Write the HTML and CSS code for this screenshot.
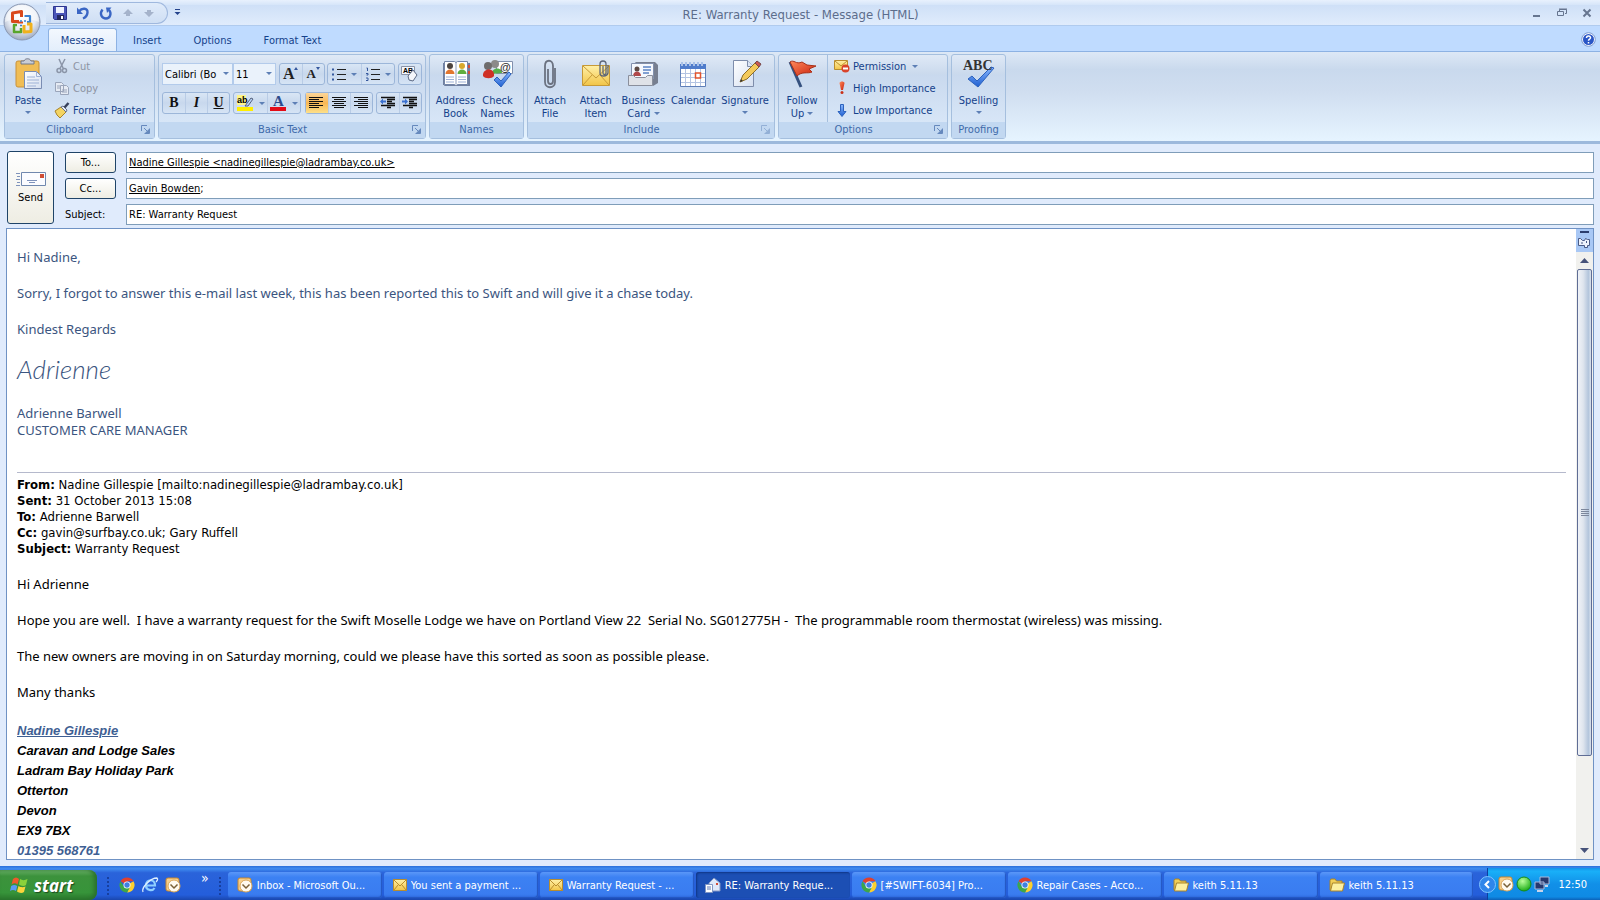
FILE: index.html
```html
<!DOCTYPE html>
<html lang="en">
<head>
    <meta charset="UTF-8">
    <meta name="viewport" content="width=device-width, initial-scale=1.0">
    <title>RE: Warranty Request - Message (HTML)</title>
    <link rel="stylesheet" href="styles.css">
</head>
<body>
    <!-- shared symbols -->
    <svg class="defs" width="0" height="0">
        <defs>
            <linearGradient id="gPaper" x1="0" y1="0" x2="1" y2="1"><stop offset="0" stop-color="#fff"/><stop offset="1" stop-color="#d5dff0"/></linearGradient>
            <linearGradient id="gYellow" x1="0" y1="0" x2="0" y2="1"><stop offset="0" stop-color="#fff0a8"/><stop offset="1" stop-color="#f2c548"/></linearGradient>
            <linearGradient id="gBlue" x1="0" y1="0" x2="0" y2="1"><stop offset="0" stop-color="#8ab8ff"/><stop offset="1" stop-color="#1f5fd0"/></linearGradient>
            <linearGradient id="gRed" x1="0" y1="0" x2="1" y2="1"><stop offset="0" stop-color="#ff8a5c"/><stop offset="1" stop-color="#c9200c"/></linearGradient>
            <radialGradient id="gGreen" cx=".4" cy=".3" r=".7"><stop offset="0" stop-color="#b8ff9a"/><stop offset="1" stop-color="#1fae1a"/></radialGradient>
            <radialGradient id="gOrb" cx=".5" cy=".35" r=".65"><stop offset="0" stop-color="#fff"/><stop offset=".6" stop-color="#e4e9f2"/><stop offset="1" stop-color="#9ea9bf"/></radialGradient>
        </defs>
        <symbol id="launch" viewBox="0 0 9 9"><path d="M.5 6V.5H6M3 3l4 4M8.500 3.500v5h-5" fill="none" stroke="#6689bd"/><path d="M8 4v4H4z" fill="#6689bd"/></symbol>
        <symbol id="outlook" viewBox="0 0 16 16"><rect x="1" y="1" width="13" height="13" rx="2" fill="#f6cf8c" stroke="#c8862c"/><circle cx="9" cy="9" r="6" fill="#fffaf0" stroke="#d9a75c"/><path d="M5.500 7.500L9 11l3.500-3.500" fill="none" stroke="#7a6038" stroke-width="1.500"/></symbol>
        <symbol id="mail" viewBox="0 0 14 12"><rect x=".5" y=".5" width="13" height="11" fill="url(#gYellow)" stroke="#b98d2e"/><path d="M1 1l6 6 6-6M1 11l4-5M13 11L9 6" fill="none" stroke="#b98d2e"/></symbol>
        <symbol id="chrome" viewBox="0 0 16 16"><path d="M8 8L1.500 4.200A7.500 7.500 0 0 1 14.500 4.200H8z" fill="#e0412f"/><path d="M8 8L14.500 4.200A7.500 7.500 0 0 1 8 15.500L11 9.500z" fill="#fbd02e"/><path d="M8 8l3 2-3 5.500A7.500 7.500 0 0 1 1.500 4.200L5 9.700z" fill="#3da64a"/><circle cx="8" cy="8" r="3.500" fill="#fff"/><circle cx="8" cy="8" r="2.700" fill="#3f80e0"/></symbol>
        <symbol id="folder" viewBox="0 0 16 14"><path d="M1 12V2.500L2 1h4l1.500 2H13v3" fill="#f2cf57" stroke="#a8832a"/><path d="M1.500 13L3.500 5H15.500L13.500 13z" fill="#fdf0a0" stroke="#a8832a"/></symbol>
    </svg>

    <header class="titlebar">
        <div class="quick">
            <button aria-label="Save"><svg width="14" height="14" viewBox="0 0 14 14"><path d="M.5.5h13v13h-12l-1-1z" fill="#4a55b8" stroke="#2c3590"/><path d="M3 1h8v6H3z" fill="#eef2ff"/><path d="M4 9h7v5H4z" fill="#23285f"/><path d="M8 10h2v3H8z" fill="#fff"/></svg></button>
            <button aria-label="Undo"><svg width="14" height="14" viewBox="0 0 14 14"><path d="M3 5.500C6 1.500 12 2 11.500 6.500c-.3 3-2 5-4.500 6" fill="none" stroke="#3a66c4" stroke-width="2.400"/><path d="M1 1.500v6.500h6z" fill="#3a66c4"/></svg></button>
            <button aria-label="Redo"><svg width="14" height="14" viewBox="0 0 14 14"><path d="M3.500 3.500C0 8 3 12.500 7 12.500s6-5 3-8.500" fill="none" stroke="#3a66c4" stroke-width="2.400"/><path d="M7 1.500h5.500L8 7z" fill="#3a66c4"/></svg></button>
            <button aria-label="Previous item"><svg width="12" height="10" viewBox="0 0 12 10"><path d="M6 1l5 5H8v2H4V6H1z" fill="#a5b3cb"/></svg></button>
            <button aria-label="Next item"><svg width="12" height="10" viewBox="0 0 12 10"><path d="M6 9l5-5H8V2H4v2H1z" fill="#a5b3cb"/></svg></button>
        </div>
        <button class="quick-more" aria-label="Customize"><svg width="7" height="7" viewBox="0 0 7 7"><path d="M1 .5h5" stroke="#24438c"/><path d="M.5 3h6l-3 3z" fill="#24438c"/></svg></button>
        <h1 class="title">RE: Warranty Request - Message (HTML)</h1>
        <div class="window-buttons">
            <button aria-label="Minimize"><svg width="10" height="10" viewBox="0 0 10 10"><path d="M1 8h7" stroke="#66758f" stroke-width="2"/></svg></button>
            <button aria-label="Restore"><svg width="10" height="10" viewBox="0 0 10 10"><path d="M2.500 3V1.500h7v4H8M.5 3.500h6v4h-6zM2 1h8" fill="none" stroke="#66758f"/></svg></button>
            <button aria-label="Close"><svg width="10" height="10" viewBox="0 0 10 10"><path d="M1.500 1.500l7 7M8.500 1.500l-7 7" stroke="#66758f" stroke-width="2"/></svg></button>
        </div>
    </header>
    <button class="orb" aria-label="Office Button"><svg width="38" height="38" viewBox="0 0 38 38"><circle cx="19" cy="19" r="18" fill="url(#gOrb)" stroke="#8a98b3"/><path d="M2 19a17 17 0 0 1 34 0c-8-4-26-4-34 0z" fill="#fff" opacity=".5"/><g fill="none" stroke-linejoin="round"><path d="M15 18.500H9.500V10l9-1.500V14" stroke="#d9481c" stroke-width="3"/><path d="M21.500 13H27v6h-3" stroke="#3b82d0" stroke-width="2.200"/><path d="M15 17v2.500h5" stroke="#d9481c" stroke-width="2"/><path d="M14 22h-3v7h7v-4" stroke="#58a52c" stroke-width="2.500"/><path d="M21 22v7l7-.5V21h-4" stroke="#f0b11c" stroke-width="3"/><path d="M17 18h2M21 18h2M17 22.500h2" stroke="#3b82d0" stroke-width="1.500"/></g></svg></button>

    <nav class="tabs">
        <button class="tab tab-active">Message</button>
        <button class="tab">Insert</button>
        <button class="tab">Options</button>
        <button class="tab">Format Text</button>
        <button class="help" aria-label="Help"><svg width="15" height="15" viewBox="0 0 15 15"><circle cx="7.500" cy="7.500" r="6.800" fill="#fff" stroke="#7d9ad0"/><circle cx="7.500" cy="7.500" r="5.500" fill="#2a56c6"/><path d="M5.500 6c0-3 4.200-2.500 4 0-.2 1.200-2 1.200-2 2.700M7.500 10v1.500" fill="none" stroke="#fff" stroke-width="1.500"/></svg></button>
    </nav>

    <div class="ribbon">
        <section class="group group-clipboard">
            <div class="group-body">
                <button class="big"><svg width="30" height="32" viewBox="0 0 30 32"><rect x="3" y="3" width="23" height="26" rx="2" fill="#f0bd55" stroke="#c8913a"/><path d="M8 6V3h3c1-3 6-3 7 0h3v3z" fill="#c9cdd6" stroke="#71788a"/><path d="M11.500 13.500h12l5 5v12h-17z" fill="url(#gPaper)" stroke="#7a8db3"/><path d="M23.500 13.500v5h5M14 19h8M14 22h12M14 25h12M14 28h9" fill="none" stroke="#9db1d6"/></svg><span>Paste</span><i class="arrow"></i></button>
                <div class="small-list">
                    <button class="small off"><svg width="16" height="16" viewBox="0 0 16 16"><g fill="none" stroke="#8b95a8" stroke-width="1.500"><path d="M5 1l4.500 10M11 1L6 10.500"/><circle cx="5" cy="12.500" r="2"/><circle cx="10.500" cy="12.500" r="2"/></g></svg>Cut</button>
                    <button class="small off"><svg width="16" height="16" viewBox="0 0 16 16"><path d="M1.500 2.500h6l2 2v7h-8zM6.500 5.500h6l2 2v7h-8z" fill="#e6ebf4" stroke="#9aa5ba"/><path d="M3 6h3M3 8h3M8 10h5M8 12h5" stroke="#9aa5ba"/></svg>Copy</button>
                    <button class="small"><svg width="16" height="16" viewBox="0 0 16 16"><path d="M1 9l6-4 5 5-6 6-3-3z" fill="#f3d463" stroke="#a98328"/><path d="M7 5l2-1 4 4-1 2z" fill="#e9edf5" stroke="#66718a"/><path d="M10.500 5.500L14.500 1" stroke="#37415c" stroke-width="2.500"/></svg>Format Painter</button>
                </div>
            </div>
            <h2 class="group-title">Clipboard<button class="launcher" aria-label="Clipboard options"><svg width="9" height="9"><use href="#launch"/></svg></button></h2>
        </section>

        <section class="group group-text">
            <div class="group-body text-rows">
                <div class="row">
                    <div class="fonts">
                        <span class="select select-font"><select aria-label="Font"><option>Calibri (Bo</option></select></span>
                        <span class="select select-size"><select aria-label="Font size"><option>11</option></select></span>
                    </div>
                    <div class="set">
                        <button class="tool" aria-label="Grow font"><b class="glyph-a">A</b><i class="tip up"></i></button>
                        <button class="tool" aria-label="Shrink font"><b class="glyph-a small-a">A</b><i class="tip"></i></button>
                    </div>
                    <div class="set">
                        <button class="tool wide" aria-label="Bullets"><svg width="14" height="14" viewBox="0 0 14 14"><path d="M5 2.500h9M5 7.500h9M5 12.500h9" stroke="#222"/><path d="M0 1.500h2v2H0zM0 6.500h2v2H0zM0 11.500h2v2H0z" fill="#35589e"/></svg><i class="arrow"></i></button>
                        <button class="tool wide" aria-label="Numbering"><svg width="14" height="14" viewBox="0 0 14 14"><path d="M5 2.500h9M5 7.500h9M5 12.500h9" stroke="#222"/><path d="M.5 1h1v3M0 6.500h2v1.500H0.500M0 11h2v2.500H0" fill="none" stroke="#35589e"/></svg><i class="arrow"></i></button>
                    </div>
                    <div class="set">
                        <button class="tool" aria-label="Clear formatting"><svg width="18" height="16" viewBox="0 0 18 16"><path d="M.5.500h13v8H.5z" fill="#f4f6fb" stroke="#8a94a8"/><text x="2" y="7" class="svg-tiny">AB</text><path d="M7 10l5-6 4 5-4 6-4-1z" fill="#f4f6fb" stroke="#5c6a85"/></svg></button>
                    </div>
                </div>
                <div class="row">
                    <div class="set">
                        <button class="tool letter" aria-label="Bold"><b>B</b></button>
                        <button class="tool letter" aria-label="Italic"><em>I</em></button>
                        <button class="tool letter" aria-label="Underline"><u>U</u></button>
                    </div>
                    <div class="set">
                        <button class="tool wide" aria-label="Highlight"><svg width="17" height="17" viewBox="0 0 17 17"><path d="M0 0h9v10H0z" fill="#fdf58a"/><path d="M0 12h16v4H0z" fill="#ffee00"/><text x="0" y="8" class="svg-ab">ab</text><path d="M8 11l6-8 2 1-5 7z" fill="#b9d5f7" stroke="#55617c"/></svg><i class="arrow"></i></button>
                        <button class="tool wide" aria-label="Font color"><svg width="17" height="17" viewBox="0 0 17 17"><text x="3" y="11" class="svg-a">A</text><path d="M0 12h16v4H0z" fill="#e30b17"/></svg><i class="arrow"></i></button>
                    </div>
                    <div class="set">
                        <button class="tool on" aria-label="Align left"><svg width="15" height="14" viewBox="0 0 15 14"><path d="M0 1.500h14M0 3.500h10M0 5.500h14M0 7.500h10M0 9.500h14M0 11.500h10" stroke="#111"/></svg></button>
                        <button class="tool" aria-label="Center"><svg width="15" height="14" viewBox="0 0 15 14"><path d="M0 1.500h14M2 3.500h10M0 5.500h14M2 7.500h10M0 9.500h14M2 11.500h10" stroke="#111"/></svg></button>
                        <button class="tool" aria-label="Align right"><svg width="15" height="14" viewBox="0 0 15 14"><path d="M0 1.500h14M4 3.500h10M0 5.500h14M4 7.500h10M0 9.500h14M4 11.500h10" stroke="#111"/></svg></button>
                    </div>
                    <div class="set">
                        <button class="tool" aria-label="Decrease indent"><svg width="16" height="14" viewBox="0 0 16 14"><path d="M1 1.500h14M7 3.500h8M7 5.500h5M7 7.500h8M1 9.500h14M7 11.500h4" stroke="#111" stroke-width="1.400"/><path d="M0 5.500l3-3v2h3v2H3v2z" fill="#3a70d0"/></svg></button>
                        <button class="tool" aria-label="Increase indent"><svg width="16" height="14" viewBox="0 0 16 14"><path d="M1 1.500h14M7 3.500h8M7 5.500h5M7 7.500h8M1 9.500h14M7 11.500h4" stroke="#111" stroke-width="1.400"/><path d="M6 5.500l-3-3v2H0v2h3v2z" fill="#3a70d0"/></svg></button>
                    </div>
                </div>
            </div>
            <h2 class="group-title">Basic Text<button class="launcher" aria-label="Basic Text options"><svg width="9" height="9"><use href="#launch"/></svg></button></h2>
        </section>

        <section class="group group-names">
            <div class="group-body">
                <button class="big"><svg width="32" height="32" viewBox="0 0 32 32"><path d="M3 5h2v22H3zM27 5h3v23H4l1-2h22z" fill="#6f7f9f"/><path d="M29 7v3M29 13v3" stroke="#d64c3a" stroke-width="2"/><path d="M4.500 3.500h10l1.500 1 1.500-1h10v23h-10l-1.500 1-1.500-1h-10z" fill="#fff" stroke="#7486a8"/><path d="M16 4v22" stroke="#90a0bf"/><circle cx="10" cy="8" r="3" fill="#4d4540"/><path d="M5.500 16c0-6 9-6 9 0z" fill="#e2762e"/><circle cx="22" cy="8" r="3" fill="#d8a92c"/><path d="M17.500 16c0-6 9-6 9 0z" fill="#5fae40"/><path d="M6 19h8M6 21.500h8M6 24h8M18 19h8M18 21.500h8M18 24h8" stroke="#9db1d6"/></svg><span>Address<br>Book</span></button>
                <button class="big"><svg width="32" height="32" viewBox="0 0 32 32"><path d="M14.500 3.500h16v12h-16z" fill="#fff" stroke="#8190ad"/><circle cx="13" cy="6" r="4" fill="#8b8a8a"/><path d="M10 16c0-7 10-7 10-1z" fill="#55b04a"/><text x="18" y="13" class="svg-at">@</text><circle cx="6" cy="8" r="4" fill="#6e6c6c"/><path d="M1 18c-1-8 12-9 11 0-2 3-9 3-11 0z" fill="#cf3026"/><path d="M12 22l3-3 4 4 8-9 2 2-10 13z" fill="url(#gBlue)" stroke="#2c62bd"/></svg><span>Check<br>Names</span></button>
            </div>
            <h2 class="group-title">Names</h2>
        </section>

        <section class="group group-include">
            <div class="group-body">
                <button class="big"><svg width="32" height="32" viewBox="0 0 32 32"><path d="M14 11v12c0 4 5 4 5 0V8c0-7-8-7-8 0v16c0 7 10 7 10 0V10" fill="none" stroke="#6b7280" stroke-width="1.800"/></svg><span>Attach<br>File</span></button>
                <button class="big"><svg width="32" height="32" viewBox="0 0 32 32"><path d="M2.500 7.500h27v20h-27z" fill="url(#gYellow)" stroke="#c79a37"/><path d="M3 8l13 12L29 8M3 27l9-10M29 27l-9-10" fill="none" stroke="#c79a37"/><path d="M23 8v7c0 2 3 2 3 0V6c0-4-6-4-6 0v9c0 4 7 4 8 0V7" fill="none" stroke="#5c6579" stroke-width="1.300"/></svg><span>Attach<br>Item</span></button>
                <button class="big"><svg width="32" height="32" viewBox="0 0 32 32"><path d="M8 4h20l3 3v18l-5 3z" fill="#777f90"/><path d="M4.500 5.500h22v15h-22z" fill="#f5f8fd" stroke="#8290ac"/><circle cx="10" cy="11" r="2.500" fill="#5d4a44"/><path d="M6 18c0-6 8-6 8 0z" fill="#b0484a"/><path d="M16 9h8M16 12h8M16 15h6" stroke="#5b82c4" stroke-width="1.500"/><path d="M1.500 17.500h5l2 2h10l2-2h5v10h-24z" fill="#dfe2e8" stroke="#8a8f9c"/></svg><span>Business<br>Card <i class="arrow"></i></span></button>
                <button class="big"><svg width="32" height="32" viewBox="0 0 32 32"><path d="M3.500 6.500h25v22h-25z" fill="#fff" stroke="#5f7fb8"/><path d="M3 6h26v5H3z" fill="#4f7ccb"/><path d="M5 4v4M9 4v4M13 4v4M17 4v4M21 4v4M25 4v4" stroke="#a9c1e8" stroke-width="2"/><path d="M8.500 11v17M13.500 11v17M18.500 11v17M23.500 11v17M4 15.500h24M4 19.500h24M4 24.500h24" stroke="#b4c4e2"/><path d="M18.500 15h5v5h-5z" fill="#fff" stroke="#e1532d" stroke-width="1.500"/></svg><span>Calendar</span></button>
                <button class="big"><svg width="32" height="32" viewBox="0 0 32 32"><path d="M4.500 2.500h14l6 6v20h-20z" fill="url(#gPaper)" stroke="#7e8dab"/><path d="M18.500 2.500v6h6" fill="#dce5f4" stroke="#7e8dab"/><path d="M11 24l3-7L26 5l4 4-12 12z" fill="#f3c95a" stroke="#8c6c26"/><path d="M26 5l2-2 4 3-2 3z" fill="#c8574f" stroke="#77494b"/><path d="M11 24l1-3 2 2z" fill="#333"/></svg><span>Signature</span><i class="arrow"></i></button>
            </div>
            <h2 class="group-title">Include<button class="launcher off" aria-label="Include options" disabled><svg width="9" height="9"><use href="#launch"/></svg></button></h2>
        </section>

        <section class="group group-options">
            <div class="group-body">
                <button class="big"><svg width="32" height="32" viewBox="0 0 32 32"><path d="M4 4l11 25" stroke="#35517f" stroke-width="3"/><path d="M4 4c4-3 6 3 12 0l5 3 9 1-7 3 3 3c-4 2-10-1-15 4z" fill="url(#gRed)" stroke="#a93018"/></svg><span>Follow<br>Up <i class="arrow"></i></span></button>
                <div class="small-list divided">
                    <button class="small"><svg width="16" height="16" viewBox="0 0 16 16"><path d="M.5 2.500h13v9H.5z" fill="url(#gYellow)" stroke="#b98d2e"/><path d="M1 3l6 5 6-5" fill="none" stroke="#b98d2e"/><circle cx="11.500" cy="10.500" r="4" fill="#d9442c"/><path d="M9 10.500h5" stroke="#fff" stroke-width="2"/></svg>Permission <i class="arrow"></i></button>
                    <button class="small"><svg width="16" height="16" viewBox="0 0 16 16"><path d="M5.500 3c.5-2 4.500-2 5 0L9 10H7z" fill="url(#gRed)"/><circle cx="8" cy="12.500" r="1.500" fill="#c93018"/></svg>High Importance</button>
                    <button class="small"><svg width="16" height="16" viewBox="0 0 16 16"><path d="M6.500 2.500h3v7H12l-4 5-4-5h2.500z" fill="url(#gBlue)" stroke="#2c62bd"/></svg>Low Importance</button>
                </div>
            </div>
            <h2 class="group-title">Options<button class="launcher" aria-label="Message options"><svg width="9" height="9"><use href="#launch"/></svg></button></h2>
        </section>

        <section class="group group-proofing">
            <div class="group-body">
                <button class="big"><svg width="32" height="32" viewBox="0 0 32 32"><path d="M5 21l4-3 5 5L28 9l3 1-16 19z" fill="url(#gBlue)" stroke="#2c62bd"/><text x="0" y="12" class="svg-abc">ABC</text></svg><span>Spelling</span><i class="arrow"></i></button>
            </div>
            <h2 class="group-title">Proofing</h2>
        </section>
    </div>

    <main class="compose">
        <form class="headers">
            <button type="button" class="send"><svg width="30" height="15" viewBox="0 0 30 15"><path d="M5.500.500h24v13h-24z" fill="#fbfcff" stroke="#7088ae"/><path d="M24 2h4v4h-4z" fill="#cf4e33"/><path d="M11 8.500h10M13 10.500h6M0 1.500h4M1 4.500h3M0 7.500h4M1 10.500h3M0 13.500h4" stroke="#7f93bb"/></svg>Send</button>
            <div class="fields">
                <button type="button" class="pick">To...</button>
                <div class="field"><a href="#">Nadine Gillespie &lt;nadinegillespie@ladrambay.co.uk&gt;</a><input type="text" aria-label="To"></div>
                <button type="button" class="pick">Cc...</button>
                <div class="field"><a href="#">Gavin Bowden</a>;<input type="text" aria-label="Cc"></div>
                <label for="subject">Subject:</label>
                <input class="field" type="text" id="subject" value="RE: Warranty Request">
            </div>
        </form>

        <div class="editor">
            <article class="message">
                <div class="reply">
                    <p>Hi Nadine,</p>
                    <p>Sorry, I forgot to answer this e-mail last week, this has been reported this to Swift and will give it a chase today.</p>
                    <p>Kindest Regards</p>
                    <p class="handwriting">Adrienne</p>
                    <p class="signoff">Adrienne Barwell<br>CUSTOMER CARE MANAGER</p>
                </div>
                <div class="quoted-head">
                    <b>From:</b> Nadine Gillespie [mailto:nadinegillespie@ladrambay.co.uk]<br>
                    <b>Sent:</b> 31 October 2013 15:08<br>
                    <b>To:</b> Adrienne Barwell<br>
                    <b>Cc:</b> gavin@surfbay.co.uk; Gary Ruffell<br>
                    <b>Subject:</b> Warranty Request
                </div>
                <p>Hi Adrienne</p>
                <p>Hope you are well.&nbsp; I have a warranty request for the Swift Moselle Lodge we have on Portland View 22&nbsp; Serial No. SG012775H -&nbsp; The programmable room thermostat (wireless) was missing.</p>
                <p>The new owners are moving in on Saturday morning, could we please have this sorted as soon as possible please.</p>
                <p>Many thanks</p>
                <address class="signature">
                    <a href="#">Nadine Gillespie</a><br>
                    Caravan and Lodge Sales<br>
                    Ladram Bay Holiday Park<br>
                    Otterton<br>
                    Devon<br>
                    EX9 7BX<br>
                    <span class="phone">01395 568761</span>
                </address>
            </article>
            <div class="scrollbar">
                <div class="scroll-top"><svg width="14" height="20" viewBox="0 0 14 20"><path d="M3 2h9" stroke="#2c3e6e" stroke-width="2"/><path d="M1.500 8.500h2l2 2h2l1-2 2 1h2v6h-2v2h-3v-2h-6z" fill="#eef3fc" stroke="#4a5b86"/><path d="M5 12v2M9.500 11v2" stroke="#4a5b86"/></svg></div>
                <button class="scroll-arrow" aria-label="Scroll up"><svg width="9" height="5" viewBox="0 0 9 5"><path d="M0 5h9L4.500 0z" fill="#47537a"/></svg></button>
                <div class="scroll-track"><div class="scroll-thumb"></div></div>
                <button class="scroll-arrow" aria-label="Scroll down"><svg width="9" height="5" viewBox="0 0 9 5"><path d="M0 0h9L4.500 5z" fill="#47537a"/></svg></button>
            </div>
        </div>
    </main>

    <footer class="taskbar">
        <button class="start"><svg width="19" height="18" viewBox="0 0 19 18"><path d="M3 3c2-2 4-2 6 0L7.500 8.500c-2-2-4-1.500-6 0z" fill="#ee5a2c"/><path d="M10 3c2 1.500 5 1.500 7.500 0L16 9c-2 1.500-5 1-7-.5z" fill="#8bd13b"/><path d="M1.200 10c2-1.500 4-1.500 6 0L6 15c-2-1.500-4-1.500-6 0z" fill="#5a9bf5"/><path d="M8.500 10c2 1.500 5 1.500 7 0.500L14 16c-2 1.500-5 1-7-.5z" fill="#fbd43c"/></svg>start</button>
        <i class="grip"></i>
        <div class="launch">
            <button aria-label="Chrome"><svg width="16" height="16"><use href="#chrome"/></svg></button>
            <button aria-label="Internet Explorer"><svg width="16" height="16" viewBox="0 0 16 16"><path d="M4 8.500h9c0-7-9-7-9 0 0 5 6.500 6 8.500 2.500" fill="none" stroke="#8fd0ff" stroke-width="2.200"/><path d="M1 15C-1 11 8 1 15 1c1.500 1 0 3-1 4" fill="none" stroke="#dff0ff" stroke-width="1.300"/></svg></button>
            <button aria-label="Outlook"><svg width="16" height="16"><use href="#outlook"/></svg></button>
        </div>
        <span class="more">»</span>
        <i class="grip"></i>
        <div class="tasks">
            <button class="task"><svg width="16" height="16"><use href="#outlook"/></svg><span>Inbox - Microsoft Ou...</span></button>
            <button class="task"><svg width="14" height="12"><use href="#mail"/></svg><span>You sent a payment ...</span></button>
            <button class="task"><svg width="14" height="12"><use href="#mail"/></svg><span>Warranty Request - ...</span></button>
            <button class="task task-active"><svg width="16" height="16" viewBox="0 0 16 16"><path d="M4 6l5-5 6 5v8H5z" fill="#dfe8fa" stroke="#8297c4"/><path d="M.5 7.500h7v8h-7z" fill="#fff" stroke="#8297c4"/><path d="M2 10h4M2 12h4" stroke="#5f78b5"/><path d="M11 6h2v2h-2z" fill="#d34b36"/></svg><span>RE: Warranty Reque...</span></button>
            <button class="task"><svg width="16" height="16"><use href="#chrome"/></svg><span>[#SWIFT-6034] Pro...</span></button>
            <button class="task"><svg width="16" height="16"><use href="#chrome"/></svg><span>Repair Cases - Acco...</span></button>
            <button class="task"><svg width="16" height="14"><use href="#folder"/></svg><span>keith 5.11.13</span></button>
            <button class="task"><svg width="16" height="14"><use href="#folder"/></svg><span>keith 5.11.13</span></button>
        </div>
        <div class="tray">
            <button class="tray-toggle" aria-label="Show hidden icons"><svg width="17" height="17" viewBox="0 0 17 17"><circle cx="8.500" cy="8.500" r="8" fill="#2f86ea" stroke="#7fc4ff"/><path d="M10 5L6.500 8.500 10 12" fill="none" stroke="#fff" stroke-width="2"/></svg></button>
            <svg width="16" height="16"><use href="#outlook"/></svg>
            <svg width="16" height="16" viewBox="0 0 16 16"><circle cx="8" cy="8" r="7" fill="url(#gGreen)" stroke="#168a1c"/></svg>
            <svg width="16" height="16" viewBox="0 0 16 16"><path d="M6 1h9v7H6zM1 6h9v7H1z" fill="#26386e" stroke="#a9b9dc"/><path d="M3 15h6M11 10h3" stroke="#c9d4ea" stroke-width="2"/></svg>
            <time>12:50</time>
        </div>
    </footer>
</body>
</html>
```
FILE: styles.css
```css
*{
    box-sizing: border-box;
}
body{
    margin: 0;
    height: 100vh;
    display: flex;
    flex-direction: column;
    overflow: hidden;
    background: #e0ebfc;
    font-family: "DejaVu Sans Condensed", Tahoma, "Noto Sans", sans-serif;
    font-size: 11px;
    color: #000;
}
button{
    margin: 0;
    padding: 0;
    border: 0;
    background: none;
    font: inherit;
    color: inherit;
    white-space: nowrap;
}
svg{
    display: block;
    flex: none;
    overflow: visible;
}
.defs{
    position: absolute;
}

/* title bar */
.titlebar{
    display: flex;
    align-items: center;
    height: 26px;
    padding: 0 8px 0 46px;
    border-bottom: 1px solid #b0cbee;
    background: linear-gradient(#e8f1fd, #d6e5f9 20%, #cfe0f7 22%, #e0ecfc);
}
.quick{
    display: flex;
    align-items: center;
    gap: 9px;
    height: 22px;
    width: 122px;
    padding-left: 7px;
    border: 1px solid #9fb8de;
    border-left: 0;
    border-radius: 0 11px 11px 0;
    background: linear-gradient(#e0ebfa, #cfdff4);
}
.quick-more{
    margin-left: 6px;
}
.title{
    flex: 1;
    margin: 3px 0 0;
    padding-right: 112px;
    text-align: center;
    font-size: 13px;
    font-weight: normal;
    color: #5c6d8c;
}
.window-buttons{
    display: flex;
    gap: 15px;
}
.orb{
    position: absolute;
    top: 3px;
    left: 3px;
    z-index: 2;
}

/* tabs */
.tabs{
    display: flex;
    height: 25px;
    padding: 2px 4px 0 48px;
    background: #bfdbff;
    font-size: 11px;
    color: #15428b;
}
.tab{
    padding: 0 15px;
    border: 1px solid transparent;
    border-bottom: 0;
}
.tab-active{
    min-width: 69px;
    padding: 0 10px;
    border-color: #8db2e3;
    border-radius: 3px 3px 0 0;
    background: linear-gradient(#f3f8fe, #e3eefb);
}
.help{
    margin-left: auto;
}

/* ribbon */
.ribbon{
    display: flex;
    gap: 3px;
    height: 93px;
    padding: 2px 4px;
    border: solid #8db2e3;
    border-width: 1px 0 3px;
    border-bottom-color: #9db9dc;
    background: linear-gradient(#dde8f6, #c9d9ed 20%, #d0def0 45%, #e6f4ff);
    color: #15428b;
}
.group{
    display: flex;
    flex-direction: column;
    border: 1px solid #a5bfde;
    border-radius: 3px;
    background: linear-gradient(#dfe9f6, #cbdaed 22%, #c9d9ee 24%, #dceafa);
}
.group-clipboard{ width: 151px; }
.group-text{ width: 268px; }
.group-names{ width: 95px; }
.group-include{ width: 248px; }
.group-options{ width: 170px; }
.group-proofing{ width: 55px; }
.group-body{
    flex: 1;
    min-height: 0;
    display: flex;
    justify-content: center;
}
.group-include .group-body{
    justify-content: space-between;
    padding: 0 4px 0 1px;
}
.group-title{
    flex: none;
    position: relative;
    height: 16px;
    margin: 0;
    background: #c2d8f1;
    font-size: 11px;
    line-height: 16px;
    font-weight: normal;
    text-align: center;
    color: #3e6aaa;
}
.group-title:has(.launcher){
    padding-right: 19px;
}
.launcher{
    position: absolute;
    right: 4px;
    top: 3px;
}
.launcher.off{
    opacity: 0.5;
}
.arrow{
    display: inline-block;
    width: 0;
    height: 0;
    border: 3px solid transparent;
    border-top-color: #5d7fb5;
    border-bottom: 0;
    vertical-align: 2px;
}
.big{
    display: flex;
    flex-direction: column;
    align-items: center;
    min-width: 42px;
    padding: 3px 1px 0;
    line-height: 13px;
}
.big > svg{
    margin-bottom: 4px;
}
.big > .arrow{
    margin-top: 4px;
}
.group-clipboard .big,
.group-options .big{
    min-width: 46px;
}
.small-list{
    flex: 1;
    padding-left: 3px;
}
.divided{
    margin-left: 2px;
    padding-left: 6px;
    border-left: 1px solid #a5bfde;
}
.small{
    display: flex;
    align-items: center;
    gap: 3px;
    height: 22px;
}
.small .arrow{
    margin-left: 3px;
}
.small.off{
    color: #8d94a3;
}
.text-rows{
    flex-direction: column;
    justify-content: flex-start;
    gap: 7px;
    padding: 8px 3px 0;
}
.row{
    display: flex;
    justify-content: space-between;
}
.fonts{
    display: flex;
}
.select{
    position: relative;
    height: 22px;
}
.select::after{
    content: "";
    position: absolute;
    right: 4px;
    top: 9px;
    border: 3px solid transparent;
    border-top-color: #5d7fb5;
    border-bottom: 0;
    pointer-events: none;
}
.select select{
    appearance: none;
    width: 100%;
    height: 22px;
    padding: 0 2px;
    border: 1px solid #b3cbeb;
    border-radius: 0;
    background: #eaf2fb;
    font: inherit;
    color: #000;
}
.select-font{ width: 71px; }
.select-size{ width: 43px; }
.set{
    display: flex;
    height: 22px;
    border: 1px solid #9cb6d9;
    border-radius: 3px;
    background: linear-gradient(#d9e6f5, #c8d8ed 50%, #d6e4f5);
}
.tool{
    display: flex;
    align-items: center;
    justify-content: center;
    width: 22px;
}
.tool + .tool{
    border-left: 1px solid #b9cce6;
}
.wide{
    width: 33px;
    gap: 5px;
}
.on{
    background: linear-gradient(#fbd69a, #f9b754 50%, #fde08a);
}
.glyph-a{
    font: bold 16px "Liberation Serif", serif;
    color: #222;
}
.small-a{
    font-size: 13px;
}
.tip{
    align-self: flex-start;
    margin-top: 3px;
    border: 2px solid transparent;
    border-top: 3px solid #35589e;
    border-bottom: 0;
}
.tip.up{
    border-top: 0;
    border-bottom: 3px solid #35589e;
}
.letter{
    font: bold 14px "Liberation Serif", serif;
    color: #111;
}
.svg-tiny{ font: bold 7px "Liberation Sans", sans-serif; }
.svg-ab{ font: bold 9px "Liberation Sans", sans-serif; }
.svg-a{ font: bold 15px "Liberation Serif", serif; fill: #2c4b8c; }
.svg-at{ font: bold 11px "Liberation Sans", sans-serif; fill: #333; }
.svg-abc{ font: bold 14px "Liberation Serif", serif; fill: #333; }

/* message headers */
.compose{
    flex: 1;
    min-height: 0;
    display: flex;
    flex-direction: column;
    padding: 7px 6px 6px;
}
.headers{
    display: flex;
    gap: 11px;
    padding-left: 1px;
    margin-bottom: 3px;
}
.send{
    display: flex;
    flex-direction: column;
    align-items: center;
    justify-content: center;
    gap: 4px;
    width: 47px;
    height: 73px;
    border: 1px solid #1f4468;
    border-radius: 3px;
    background: linear-gradient(#fff, #eeede3);
}
.fields{
    flex: 1;
    display: grid;
    grid-template-columns: 51px 1fr;
    grid-auto-rows: 22px;
    gap: 4px 10px;
    align-items: center;
}
.pick{
    height: 21px;
    border: 1px solid #1f4468;
    border-radius: 3px;
    background: linear-gradient(#fff, #eeede3);
}
.field{
    display: flex;
    align-items: center;
    width: 100%;
    height: 21px;
    padding: 0 2px;
    border: 1px solid #7f9db9;
    background: #fff;
    font: inherit;
    color: #000;
}
.field a{
    color: #000;
}
.field input{
    flex: 1;
    border: 0;
    background: none;
}

/* editor */
.editor{
    flex: 1;
    min-height: 0;
    display: flex;
    border: 1px solid #6f92c4;
    background: #fff;
}
.message{
    flex: 1;
    min-width: 0;
    overflow: hidden;
    padding: 19px 10px 0;
    font-family: "Noto Sans", Calibri, sans-serif;
    font-size: 13px;
    line-height: 18px;
}
.message p{
    margin: 0 0 18px;
}
.reply{
    color: #3b5580;
    padding-bottom: 15px;
    border-bottom: 1px solid #b5b9cc;
}
.message .handwriting{
    margin-bottom: 23px;
    font-family: "Bradley Hand ITC", Lato, cursive;
    font-size: 26px;
    line-height: 26px;
    font-style: italic;
    font-weight: 300;
}
.message .signoff{
    line-height: 17px;
}
.quoted-head{
    margin: 4px 0 18px;
    font-family: "DejaVu Sans Condensed", Tahoma, sans-serif;
    line-height: 16px;
}
.signature{
    padding-top: 2px;
    font-family: "Liberation Sans", Arial, sans-serif;
    font-size: 13px;
    line-height: 20px;
    font-weight: bold;
    font-style: italic;
}
.signature a, .phone{
    color: #3f5f93;
}

/* scrollbar */
.scrollbar{
    display: flex;
    flex-direction: column;
    width: 17px;
    background: #f1f1ee;
}
.scroll-top{
    height: 23px;
    padding: 1px;
    background: #a9c8f5;
}
.scroll-arrow{
    display: flex;
    align-items: center;
    justify-content: center;
    height: 17px;
}
.scroll-track{
    flex: 1;
}
.scroll-thumb{
    display: flex;
    align-items: center;
    justify-content: center;
    width: 15px;
    height: 85%;
    margin: 0 1px;
    border: 1px solid #5f6d95;
    border-radius: 2px;
    background: linear-gradient(90deg, #f0f3f8, #dfe5ee 40%, #b3c5dc 80%, #d8e2ee);
}
.scroll-thumb::after{
    content: "";
    width: 8px;
    height: 7px;
    background: repeating-linear-gradient(#7c879c 0 1px, transparent 1px 2px);
}

/* taskbar */
.taskbar{
    display: flex;
    align-items: stretch;
    height: 34px;
    padding-top: 4px;
    background: linear-gradient(#2a6fdb, #3f8cf0 8%, #2a63da 20%, #245edb 85%, #1a47ae);
    color: #fff;
}
.start{
    display: flex;
    align-items: center;
    gap: 5px;
    width: 97px;
    padding-left: 10px;
    border-radius: 0 8px 8px 0;
    background: linear-gradient(#6fb56c, #3c923c 20%, #37943a 75%, #2a762c);
    box-shadow: inset -3px 0 4px #2a702c;
    font: italic bold 17px "Open Sans", "Noto Sans", sans-serif;
    text-shadow: 1px 1px 1px #1b4a1d;
}
.grip{
    width: 5px;
    margin: 6px 0 4px 9px;
    background: radial-gradient(circle, #173f9e 1px, transparent 1px) 0 0 / 4px 4px;
}
.launch{
    display: flex;
    align-items: center;
    gap: 7px;
    margin-left: 8px;
}
.more{
    margin-left: 20px;
    font-size: 14px;
}
.tasks{
    flex: 1;
    display: flex;
    gap: 2px;
    padding: 2px 0;
    margin: 0 14px 0 5px;
}
.task{
    flex: 1;
    min-width: 0;
    display: flex;
    align-items: center;
    gap: 4px;
    padding-left: 9px;
    border-radius: 3px;
    background: linear-gradient(#5b97f8, #3c81f3 20%, #3a7cf0 85%, #2f6be0);
    box-shadow: inset -1px -1px 1px #2456c0;
}
.task span{
    overflow: hidden;
    text-overflow: ellipsis;
}
.task-active{
    background: #1c4fb4;
    box-shadow: inset 1px 1px 2px #0f3585;
}
.tray{
    display: flex;
    align-items: center;
    gap: 2px;
    margin-top: -2px;
    padding-right: 13px;
    border-left: 1px solid #0d3f9e;
    background: linear-gradient(#1590ea, #19b0f8 10%, #1190e8 50%, #0f8ae4 90%, #0c62b8);
}
.tray-toggle{
    margin-left: -9px;
}
.tray time{
    margin-left: 6px;
}
```
